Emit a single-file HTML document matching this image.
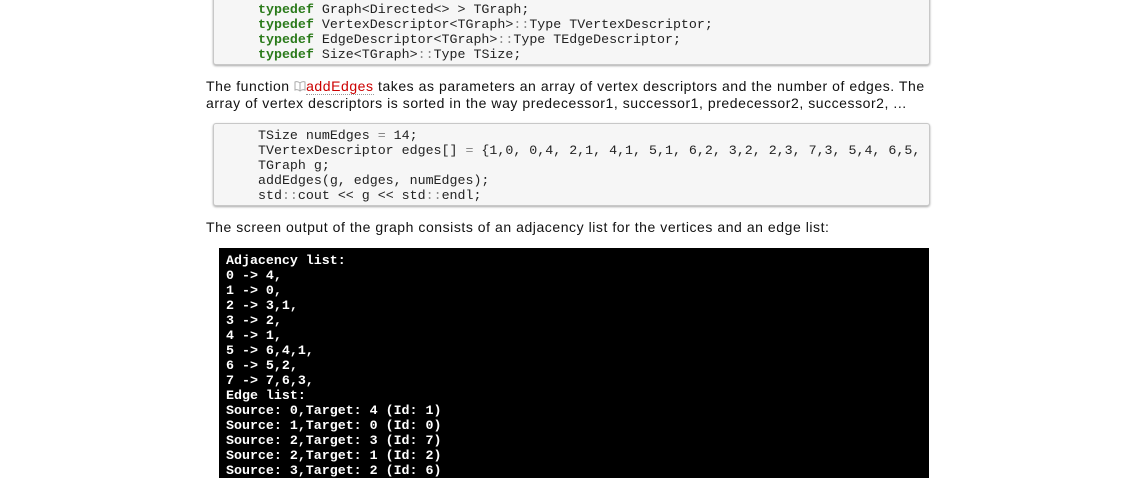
<!DOCTYPE html>
<html><head><style>
body{margin:0;background:#fff;width:1131px;height:471px;overflow:hidden;position:relative;font-family:"Liberation Sans",sans-serif;}
.box{position:absolute;left:213px;width:715px;background:#f6f6f6;border:1px solid #c8c8c8;border-radius:3px;box-shadow:0 1px 2px rgba(0,0,0,.35);}
.code{position:absolute;left:44px;font-family:"Liberation Mono",monospace;font-size:13.3px;line-height:15px;white-space:pre;color:#222;}
.k{color:#2a7a1a;font-weight:bold}
.o{color:#888}
p{position:absolute;left:206px;margin:0;font-size:14px;letter-spacing:0.55px;line-height:17px;color:#111;white-space:nowrap;}
.term{position:absolute;left:219px;top:248px;width:710px;height:230px;background:#000;}
.term div{position:absolute;left:7px;top:5px;font-family:"Liberation Mono",monospace;font-weight:bold;font-size:13.3px;line-height:15px;white-space:pre;color:#fff;}
a{color:#c00;text-decoration:none;border-bottom:1px dotted #999}
</style></head><body>
<div class="box" style="top:-5px;height:68px;"><div class="code" style="top:6px"><span class="k">typedef</span> Graph&lt;Directed&lt;&gt; &gt; TGraph;
<span class="k">typedef</span> VertexDescriptor&lt;TGraph&gt;<span class="o">::</span>Type TVertexDescriptor;
<span class="k">typedef</span> EdgeDescriptor&lt;TGraph&gt;<span class="o">::</span>Type TEdgeDescriptor;
<span class="k">typedef</span> Size&lt;TGraph&gt;<span class="o">::</span>Type TSize;</div></div>
<p style="top:78px">The function <svg width="12" height="12" viewBox="0 0 12 12" style="vertical-align:-1px"><path d="M1 2 Q3.5 1 6 3 Q8.5 1 11 2 V10 Q8.5 9 6 11 Q3.5 9 1 10 Z M6 3 V11" fill="none" stroke="#aaa" stroke-width="1"/></svg><a>addEdges</a> takes as parameters an array of vertex descriptors and the number of edges. The<br>array of vertex descriptors is sorted in the way predecessor1, successor1, predecessor2, successor2, ...</p>
<div class="box" style="top:123px;height:81px;"><div class="code" style="top:4px">TSize numEdges <span class="o">=</span> 14;
TVertexDescriptor edges[] <span class="o">=</span> {1,0, 0,4, 2,1, 4,1, 5,1, 6,2, 3,2, 2,3, 7,3, 5,4, 6,5,
TGraph g;
addEdges(g, edges, numEdges);
std<span class="o">::</span>cout &lt;&lt; g &lt;&lt; std<span class="o">::</span>endl;</div></div>
<p style="top:219px">The screen output of the graph consists of an adjacency list for the vertices and an edge list:</p>
<div class="term"><div>Adjacency list:
0 -&gt; 4,
1 -&gt; 0,
2 -&gt; 3,1,
3 -&gt; 2,
4 -&gt; 1,
5 -&gt; 6,4,1,
6 -&gt; 5,2,
7 -&gt; 7,6,3,
Edge list:
Source: 0,Target: 4 (Id: 1)
Source: 1,Target: 0 (Id: 0)
Source: 2,Target: 3 (Id: 7)
Source: 2,Target: 1 (Id: 2)
Source: 3,Target: 2 (Id: 6)</div></div>
</body></html>
